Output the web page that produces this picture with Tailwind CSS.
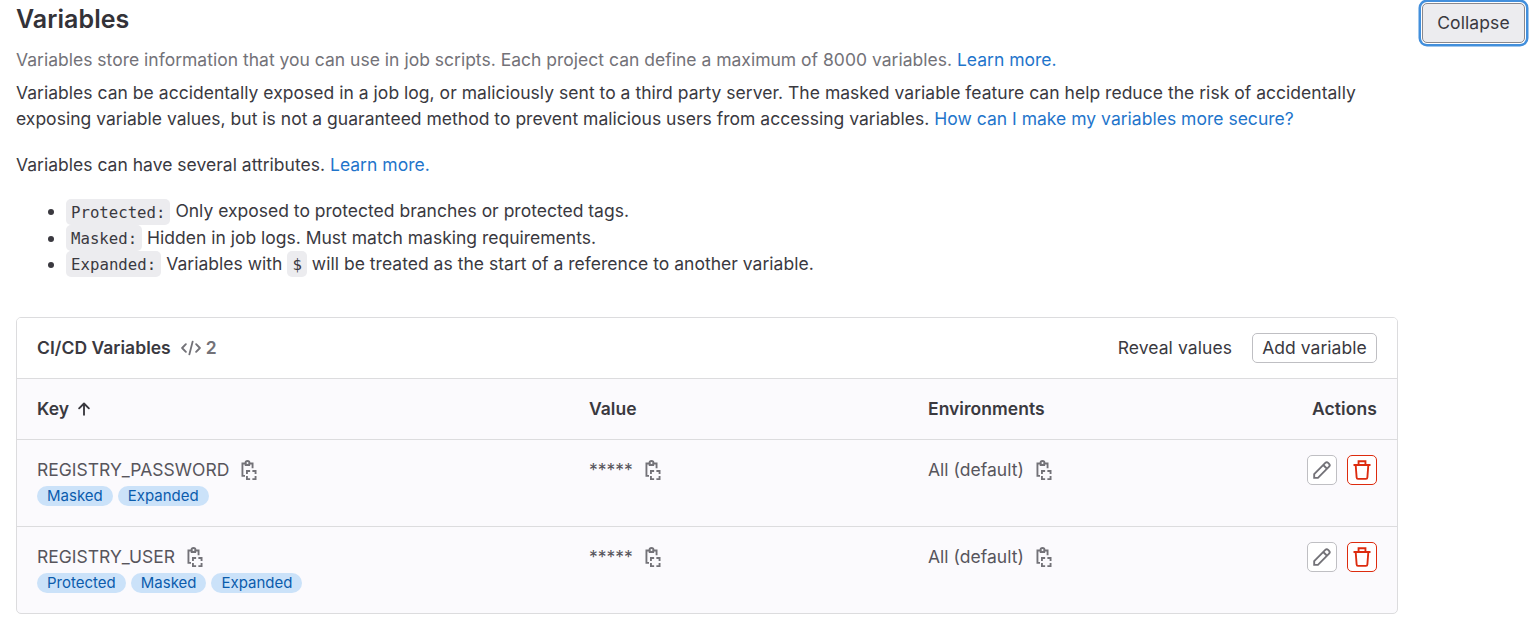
<!DOCTYPE html>
<html lang="en">
<head>
<meta charset="utf-8">
<title>CI/CD Variables</title>
<script src="https://cdn.jsdelivr.net/npm/@tailwindcss/browser@4"></script>
</head>
<body class="h-[620px] overflow-hidden bg-white font-['Inter','Noto_Sans',sans-serif] text-[17.5px] leading-[26.25px] text-[#3a393f]">
<svg class="hidden">
  <symbol id="copy" viewBox="0 0 16 16" fill="none" stroke="currentColor" stroke-width="1.5">
    <path d="M5.2 2.75H2.75v9.9H4.8M8.4 2.75h2.45V6.6M4.6 4.1h4.3"/>
    <circle cx="6.8" cy="2.3" r="1.55"/>
    <path d="M6.35 11.2V8.75H8.9M10.7 8.75h2.55v2.45M13.25 12.8v2.45H10.7M8.9 15.25H6.35V12.8"/>
  </symbol>
  <symbol id="pencil" viewBox="0 0 16 16" fill="none" stroke="currentColor" stroke-width="1.5">
    <path d="M1.75 14.25v-3l8.9-8.9a1.6 1.6 0 0 1 2.26 0l.74.74a1.6 1.6 0 0 1 0 2.26l-8.9 8.9zM9 4l3 3" />
  </symbol>
  <symbol id="trash" viewBox="0 0 16 16" fill="none" stroke="currentColor" stroke-width="1.5">
    <path d="M5.25 3.5V.95h5.5V3.5M1.2 4h13.6M2.95 4l.75 10a1.1 1.1 0 0 0 1.1 1.05h6.4a1.1 1.1 0 0 0 1.1-1.05L13.05 4"/>
  </symbol>
</svg>
<div class="flex items-start justify-between pl-4 pr-[6px]">
  <main class="w-[1382px]">
    <h2 class="pt-[5px] text-[25px] font-semibold leading-[28px] tracking-[0.06px] text-[#333238]">Variables</h2>
    <p class="mt-[14px] tracking-[0.008px] text-[#737278]">Variables store information that you can use in job scripts. Each project can define a maximum of 8000 variables. <a class="text-[#1f75cb]">Learn more.</a></p>
    <p class="mt-[6.5px]"><span class="tracking-[0.025px]">Variables can be accidentally exposed in a job log, or maliciously sent to a third party server. The masked variable feature can help reduce the risk of accidentally</span><br><span class="tracking-[0.015px]">exposing variable values, but is not a guaranteed method to prevent malicious users from accessing variables. <a class="text-[#1f75cb]">How can I make my variables more secure?</a></span></p>
    <p class="mt-[19.5px] tracking-[0.015px]">Variables can have several attributes. <a class="text-[#1f75cb]">Learn more.</a></p>
    <ul class="mt-5 list-disc pl-[50px]">
      <li class="h-[26.5px]"><code class="rounded-[5px] bg-[#ececef] px-[5px] py-[3.5px] font-['DejaVu_Sans_Mono',monospace] text-[15.7px] leading-none">Protected:</code> Only exposed to protected branches or protected tags.</li>
      <li class="h-[26.25px]"><code class="rounded-[5px] bg-[#ececef] px-[5px] py-[3.5px] font-['DejaVu_Sans_Mono',monospace] text-[15.7px] leading-none">Masked:</code> Hidden in job logs. Must match masking requirements.</li>
      <li class="h-[26.25px] tracking-[0.025px]"><code class="rounded-[5px] bg-[#ececef] px-[5px] py-[3.5px] font-['DejaVu_Sans_Mono',monospace] text-[15.7px] leading-none">Expanded:</code> Variables with <code class="rounded-[5px] bg-[#ececef] px-[5px] py-[3.5px] font-['DejaVu_Sans_Mono',monospace] text-[15.7px] leading-none">$</code> will be treated as the start of a reference to another variable.</li>
    </ul>
    <section class="mt-10 overflow-hidden rounded-[5px] border border-[#dcdcde] bg-[#fbfafd]">
      <header class="flex h-[60px] items-center bg-white px-5">
        <h3 class="font-semibold tracking-[0.03px]">CI/CD Variables</h3>
        <span class="ml-[10px] flex items-center gap-[5px] font-semibold text-[#737278]">
          <svg class="size-5" viewBox="0 0 16 16" fill="none" stroke="currentColor" stroke-width="1.5" stroke-linecap="round" stroke-linejoin="round"><path d="M3.9 4.9.9 8l3 3.1M12.1 4.9l3 3.1-3 3.1M9.3 2.9 6.7 13.1"/></svg>2</span>
        <button class="ml-auto mr-5 tracking-[0.08px]">Reveal values</button>
        <button class="h-[30px] w-[125px] rounded-[5px] border border-[#bfbfc3] leading-none tracking-[0.03px]">Add variable</button>
      </header>
      <div class="grid h-[61px] grid-cols-[552px_339px_1fr_auto] items-center border-t border-[#dcdcde] px-5 font-semibold tracking-[0.03px]">
        <div class="flex items-center gap-[5px]">Key
          <svg class="size-5" viewBox="0 0 16 16" fill="none" stroke="currentColor" stroke-width="1.5" stroke-linecap="round" stroke-linejoin="round"><path d="M8 12.6V3.8M4.1 7.5 8 3.6l3.9 3.9"/></svg></div>
        <div>Value</div><div>Environments</div><div class="tracking-[0.1px]">Actions</div>
      </div>
      <div class="grid h-[87px] grid-cols-[552px_339px_1fr_auto] items-start border-t border-[#dcdcde] px-5 pt-[15px] text-[#57555c]">
        <div>
          <div class="flex h-[30px] items-center gap-[10px]">REGISTRY_PASSWORD <svg class="size-5 text-[#737278]"><use href="#copy"/></svg></div>
          <div class="mt-px flex gap-[5px] text-[15px] leading-5 text-[#0b5cad]"><span class="rounded-full bg-[#cbe2f9] px-[10px]">Masked</span><span class="rounded-full bg-[#cbe2f9] px-[10px]">Expanded</span></div>
        </div>
        <div class="flex h-[30px] items-center gap-[10px]">***** <svg class="size-5 text-[#737278]"><use href="#copy"/></svg></div>
        <div class="flex h-[30px] items-center gap-[10px] tracking-[0.025px]">All (default) <svg class="size-5 text-[#737278]"><use href="#copy"/></svg></div>
        <div class="flex gap-[10px]">
          <button class="grid size-[30px] place-items-center rounded-[5px] border border-[#bfbfc3] bg-white text-[#737278]"><svg class="size-5"><use href="#pencil"/></svg></button>
          <button class="grid size-[30px] place-items-center rounded-[5px] border border-[#dd2b0e] bg-white text-[#dd2b0e]"><svg class="size-5"><use href="#trash"/></svg></button>
        </div>
      </div>
      <div class="grid h-[87px] grid-cols-[552px_339px_1fr_auto] items-start border-t border-[#dcdcde] px-5 pt-[15px] text-[#57555c]">
        <div>
          <div class="flex h-[30px] items-center gap-[10px]">REGISTRY_USER <svg class="size-5 text-[#737278]"><use href="#copy"/></svg></div>
          <div class="mt-px flex gap-[5px] text-[15px] leading-5 text-[#0b5cad]"><span class="rounded-full bg-[#cbe2f9] px-[10px]">Protected</span><span class="rounded-full bg-[#cbe2f9] px-[10px]">Masked</span><span class="rounded-full bg-[#cbe2f9] px-[10px]">Expanded</span></div>
        </div>
        <div class="flex h-[30px] items-center gap-[10px]">***** <svg class="size-5 text-[#737278]"><use href="#copy"/></svg></div>
        <div class="flex h-[30px] items-center gap-[10px] tracking-[0.025px]">All (default) <svg class="size-5 text-[#737278]"><use href="#copy"/></svg></div>
        <div class="flex gap-[10px]">
          <button class="grid size-[30px] place-items-center rounded-[5px] border border-[#bfbfc3] bg-white text-[#737278]"><svg class="size-5"><use href="#pencil"/></svg></button>
          <button class="grid size-[30px] place-items-center rounded-[5px] border border-[#dd2b0e] bg-white text-[#dd2b0e]"><svg class="size-5"><use href="#trash"/></svg></button>
        </div>
      </div>
    </section>
  </main>
  <button class="mt-[3px] h-10 w-[103px] rounded-[5px] border border-[#89888d] bg-[#ececef] tracking-[0.1px] shadow-[0_0_0_1px_#fff,0_0_0_3.5px_#428fdc]">Collapse</button>
</div>
</body>
</html>
